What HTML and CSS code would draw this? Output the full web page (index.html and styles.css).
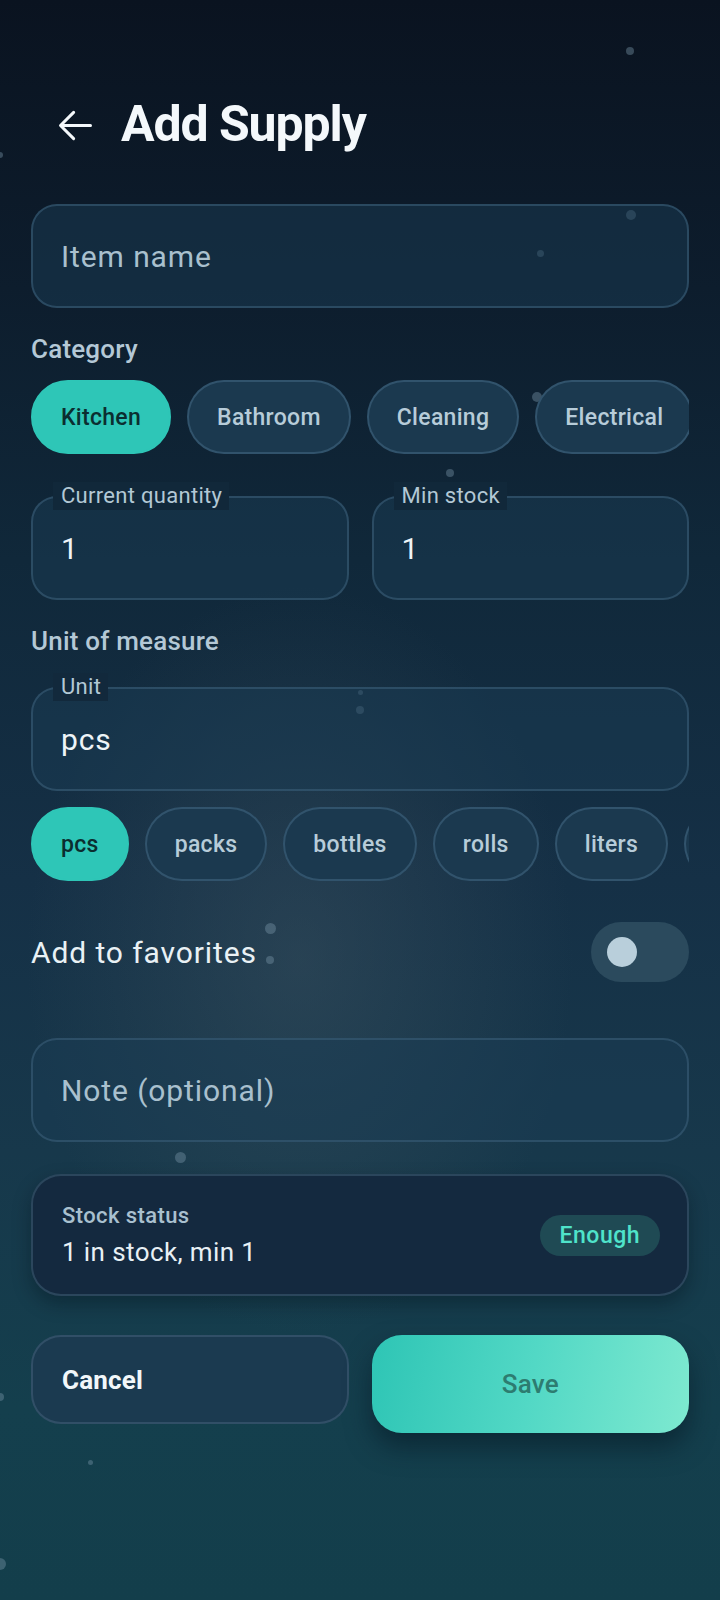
FILE: index.html
```html
<!DOCTYPE html>
<html lang="en">
<head>
  <meta charset="UTF-8" />
  <meta name="viewport" content="width=device-width, initial-scale=1.0"/>
  <title>Add Supply</title>
  <link rel="stylesheet" href="styles.css">
</head>
<body>
  <div class="screen">
    <div class="dots">
      <span class="dot d1"></span>
      <span class="dot d2"></span>
      <span class="dot d3"></span>
      <span class="dot d4"></span>
      <span class="dot d5"></span>
      <span class="dot d6"></span>
      <span class="dot d7"></span>
      <span class="dot d8"></span>
      <span class="dot d9"></span>
      <span class="dot d10"></span>
      <span class="dot d11"></span>
      <span class="dot d12"></span>
      <span class="dot d13"></span>
      <span class="dot d14"></span>
    </div>

    <header class="top-bar">
      <button class="back" aria-label="Back">
        <svg viewBox="0 0 24 24" width="45" height="45">
          <path d="M20 12H4.6M11 5l-7 7 7 7" fill="none" stroke="#f4f8fb" stroke-width="1.6" stroke-linecap="round" stroke-linejoin="round"/>
        </svg>
      </button>
      <h1 class="title">Add Supply</h1>
    </header>

    <main class="form">
      <div class="field item-name">
        <span class="placeholder">Item name</span>
      </div>

      <h2 class="section-label category-label">Category</h2>
      <div class="chips category-chips">
        <button class="chip selected">Kitchen</button>
        <button class="chip">Bathroom</button>
        <button class="chip">Cleaning</button>
        <button class="chip">Electrical</button>
        <button class="chip">Garden</button>
      </div>

      <div class="pair">
        <div class="field outlined">
          <span class="float-label">Current quantity</span>
          <span class="value">1</span>
        </div>
        <div class="field outlined">
          <span class="float-label">Min stock</span>
          <span class="value">1</span>
        </div>
      </div>

      <h2 class="section-label unit-label">Unit of measure</h2>
      <div class="field outlined unit-field">
        <span class="float-label">Unit</span>
        <span class="value">pcs</span>
      </div>
      <div class="chips unit-chips">
        <button class="chip selected">pcs</button>
        <button class="chip">packs</button>
        <button class="chip">bottles</button>
        <button class="chip">rolls</button>
        <button class="chip">liters</button>
        <button class="chip">kg</button>
      </div>

      <div class="toggle-row">
        <span class="toggle-text">Add to favorites</span>
        <span class="switch"><span class="thumb"></span></span>
      </div>

      <div class="field note">
        <span class="placeholder">Note (optional)</span>
      </div>

      <section class="status-card">
        <div class="status-text">
          <div class="status-title">Stock status</div>
          <div class="status-line">1 in stock, min 1</div>
        </div>
        <span class="badge">Enough</span>
      </section>

      <div class="actions">
        <button class="btn cancel">Cancel</button>
        <button class="btn save">Save</button>
      </div>
    </main>
  </div>
</body>
</html>
```

FILE: styles.css
```css
* {
  box-sizing: border-box;
}

body {
  margin: 0;
  font-family: Roboto, "Noto Sans", Arial, sans-serif;
  background: #0b1625;
}

button {
  font-family: inherit;
  border: none;
  background: none;
  padding: 0;
  margin: 0;
}

.screen {
  position: relative;
  width: 720px;
  min-height: 1600px;
  overflow: hidden;
  padding: 0 31px;
  background:
    radial-gradient(ellipse 380px 520px at 300px 960px, rgba(70, 92, 104, 0.38), rgba(70, 92, 104, 0) 72%),
    linear-gradient(180deg, #0a1320 0%, #0d1d2d 18%, #10283a 35%, #153046 55%, #17384b 72%, #143f4d 88%, #133e4b 100%);
}

/* floating particles */
.dots {
  position: absolute;
  inset: 0;
  z-index: 0;
}

.dot {
  position: absolute;
  border-radius: 50%;
  background: rgba(120, 148, 168, 0.42);
}

.d1 { left: 626px; top: 47px; width: 8px; height: 8px; }
.d2 { left: -3px; top: 152px; width: 6px; height: 6px; }
.d3 { left: 626px; top: 210px; width: 10px; height: 10px; }
.d4 { left: 537px; top: 250px; width: 7px; height: 7px; }
.d5 { left: 532px; top: 392px; width: 10px; height: 10px; }
.d6 { left: 446px; top: 469px; width: 8px; height: 8px; }
.d7 { left: 358px; top: 690px; width: 5px; height: 5px; }
.d8 { left: 356px; top: 706px; width: 8px; height: 8px; }
.d9 { left: 265px; top: 923px; width: 11px; height: 11px; }
.d10 { left: 266px; top: 956px; width: 8px; height: 8px; }
.d11 { left: 175px; top: 1152px; width: 11px; height: 11px; }
.d12 { left: -4px; top: 1393px; width: 8px; height: 8px; }
.d13 { left: 88px; top: 1460px; width: 5px; height: 5px; }
.d14 { left: -6px; top: 1558px; width: 12px; height: 12px; }

.top-bar,
.form {
  position: relative;
  z-index: 1;
}

.top-bar {
  display: flex;
  align-items: center;
  height: 62px;
  margin-top: 93px;
  padding-left: 22px;
}

.back {
  width: 45px;
  height: 45px;
  display: flex;
  margin-top: 3px;
}

.title {
  margin: 0 0 0 23px;
  font-size: 50px;
  line-height: 62px;
  font-weight: 700;
  letter-spacing: -1.1px;
  color: #f4f8fb;
}

.form {
  display: flex;
  flex-direction: column;
}

.field {
  position: relative;
  display: flex;
  align-items: center;
  height: 104px;
  padding: 0 28px;
  border: 2px solid rgba(58, 94, 120, 0.6);
  border-radius: 26px;
  background: rgba(26, 60, 84, 0.5);
  font-size: 30px;
  letter-spacing: 0.9px;
}

.item-name {
  margin-top: 49px;
}

.placeholder {
  color: #a9c0ce;
}

.value {
  color: #eef4f8;
}

.float-label {
  position: absolute;
  top: -16px;
  left: 20px;
  padding: 0 7px 0 8px;
  font-size: 22px;
  line-height: 28px;
  letter-spacing: 0.3px;
  color: #b3c8d5;
  background: #11283a;
}

.section-label {
  margin: 25px 0 0;
  font-size: 26px;
  line-height: 32px;
  font-weight: 500;
  letter-spacing: 0.2px;
  color: #b4c8d6;
}

.chips {
  display: flex;
  gap: 16px;
  overflow: hidden;
}

.category-chips {
  margin-top: 15px;
}

.unit-chips {
  margin-top: 16px;
}

.chip {
  flex-shrink: 0;
  height: 74px;
  padding: 0 28px;
  border: 2px solid rgba(58, 92, 118, 0.75);
  border-radius: 37px;
  background: #1b394f;
  font-size: 23px;
  font-weight: 500;
  letter-spacing: 0.3px;
  color: #b7ccd9;
}

.chip.selected {
  border-color: #2ec6b7;
  background: #2ec6b7;
  color: #0b2e30;
}

.pair {
  display: grid;
  grid-template-columns: 1fr 1fr;
  gap: 23px;
  margin-top: 42px;
}

.unit-label {
  margin-top: 25px;
}

.unit-field {
  margin-top: 30px;
}

.unit-field .float-label {
  background: #12293c;
}

.toggle-row {
  display: flex;
  align-items: center;
  justify-content: space-between;
  height: 60px;
  margin-top: 41px;
}

.toggle-text {
  font-size: 30px;
  letter-spacing: 0.9px;
  color: #e9f1f5;
}

.switch {
  position: relative;
  width: 98px;
  height: 60px;
  border-radius: 30px;
  background: #2b4a5d;
}

.thumb {
  position: absolute;
  left: 16px;
  top: 15px;
  width: 30px;
  height: 30px;
  border-radius: 50%;
  background: #b9cfdb;
}

.note {
  margin-top: 56px;
}

.status-card {
  display: flex;
  align-items: center;
  justify-content: space-between;
  height: 122px;
  margin-top: 32px;
  padding: 0 27px 0 29px;
  border: 2px solid rgba(52, 82, 106, 0.7);
  border-radius: 30px;
  background: #14293f;
  box-shadow: 0 8px 18px rgba(4, 14, 24, 0.35);
}

.status-title {
  font-size: 22px;
  line-height: 28px;
  font-weight: 500;
  letter-spacing: 0.4px;
  color: #a9c0cf;
}

.status-line {
  margin-top: 5px;
  font-size: 26px;
  line-height: 34px;
  letter-spacing: 0.4px;
  color: #e8f0f5;
}

.badge {
  height: 41px;
  padding: 0 20px;
  border-radius: 21px;
  background: #1f4a54;
  font-size: 23px;
  line-height: 41px;
  font-weight: 500;
  letter-spacing: 0.5px;
  color: #4fe3ca;
}

.actions {
  display: grid;
  grid-template-columns: 1fr 1fr;
  gap: 23px;
  align-items: start;
  margin-top: 39px;
}

.btn {
  font-size: 26px;
  letter-spacing: 0.2px;
}

.cancel {
  height: 89px;
  padding-left: 29px;
  text-align: left;
  border: 2px solid rgba(58, 88, 112, 0.7);
  border-radius: 30px;
  background: #1b3a50;
  font-weight: 700;
  color: #f2f7fa;
}

.save {
  height: 98px;
  border-radius: 30px;
  background: linear-gradient(100deg, #2ec5b5 0%, #52d8c5 50%, #7ee9d0 100%);
  box-shadow: 0 14px 26px rgba(6, 24, 34, 0.55);
  font-weight: 500;
  color: #2d7c70;
}
```
